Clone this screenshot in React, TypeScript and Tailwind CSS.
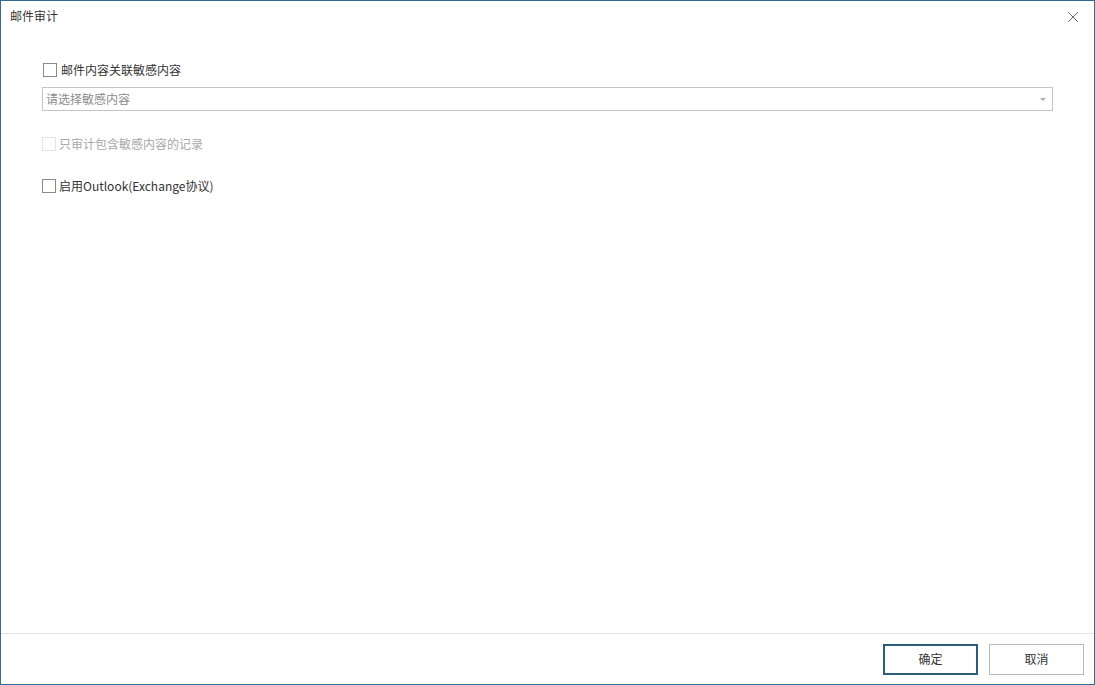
import { X } from 'lucide-react';

const font = { fontFamily: '"Microsoft YaHei", "Noto Sans CJK SC", sans-serif' };

function Check({ disabled = false }: { disabled?: boolean }) {
    return (
        <span
            className={`inline-block h-[14px] w-[14px] shrink-0 border bg-white ${
                disabled ? 'border-[#e3e3e3]' : 'border-[#8a8a8a]'
            }`}
        />
    );
}

export default function App() {
    return (
        <div
            className="flex h-[685px] w-[1095px] flex-col border border-[#2f6b90] bg-white text-[12px] leading-[14px] text-[#333]"
            style={font}
        >
            <div className="flex h-[31px] shrink-0 items-center justify-between pl-[9px] pr-[12px]">
                <span className="-mt-[1px] text-[#333]">邮件审计</span>
                <X size={18} strokeWidth={1.1} className="text-[#444]" />
            </div>
            <div className="flex flex-1 flex-col pl-[41px] pr-[41px]">
                <label className="mt-[31px] flex items-center gap-[4px] pl-[1px]">
                    <Check />
                    <span className="text-[#333]">邮件内容关联敏感内容</span>
                </label>
                <div className="mt-[10px] flex h-[24px] items-center justify-between border border-[#c4c4c4] pl-[3px] pr-[6px]">
                    <span className="text-[#8c8c8c]">请选择敏感内容</span>
                    <span className="h-0 w-0 border-x-[3px] border-t-[3px] border-x-transparent border-t-[#b0b0b0]" />
                </div>
                <label className="mt-[26px] flex items-center gap-[3px]">
                    <Check disabled />
                    <span className="text-[#a8a8a8]">只审计包含敏感内容的记录</span>
                </label>
                <label className="mt-[28px] flex items-center gap-[3px]">
                    <Check />
                    <span className="text-[#333]">启用Outlook(Exchange协议)</span>
                </label>
            </div>
            <div className="flex h-[51px] shrink-0 items-center justify-end gap-[11px] border-t border-[#e5e5e5] pr-[10px]">
                <button className="h-[31px] w-[95px] border-2 border-[#2c5d79] bg-white text-[#333]">
                    确定
                </button>
                <button className="h-[31px] w-[95px] border border-[#b8b8b8] bg-white text-[#333]">
                    取消
                </button>
            </div>
        </div>
    );
}
